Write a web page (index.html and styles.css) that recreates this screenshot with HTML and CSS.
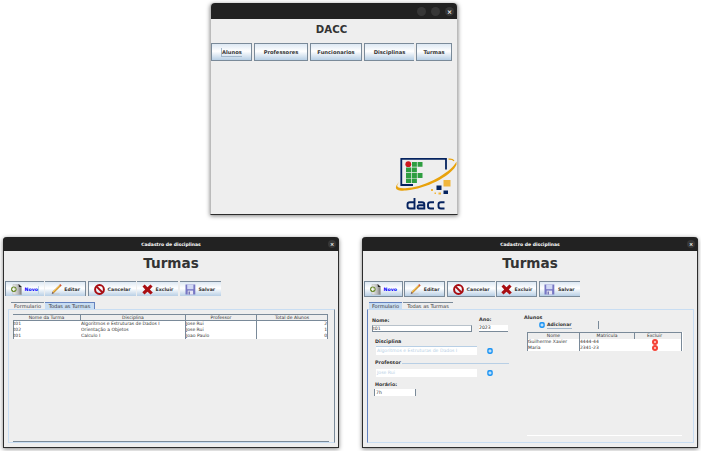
FILE: index.html
```html
<!DOCTYPE html>
<html lang="pt-BR">
<head>
<meta charset="utf-8">
<title>DACC</title>
<link rel="stylesheet" href="styles.css">
</head>
<body>
<svg class="defs" width="0" height="0" aria-hidden="true">
  <defs>
    <linearGradient id="pageFill" x1="0" x2="1"><stop offset="0" stop-color="#eee"/><stop offset=".6" stop-color="#bbb"/><stop offset="1" stop-color="#777"/></linearGradient>
    <symbol id="new" viewBox="0 0 11 11"><path d="M2 .3h6l2.500 2.500v8H2z" fill="url(#pageFill)" stroke="#aaa" stroke-width=".4"/><path d="M7.500 0l3.200 3H8z" fill="#222"/><circle cx="2.800" cy="5.200" r="2.800" fill="#6f8d35"/><path d="M2.800 3.400V7M1 5.200h3.600" stroke="#fff" stroke-width="1.200"/></symbol>
    <symbol id="edit" viewBox="0 0 11 11"><path d="M.5 10h8" stroke="#bbb" stroke-width=".7"/><path d="M2 8.500L9.300 1.400" stroke="#c58424" stroke-width="2"/><path d="M2 8.200L9 1.300" stroke="#ffd35b" stroke-width="1"/><path d="M9 1.700l1-1" stroke="#d55232" stroke-width="2"/><path d="M.8 9.800l.6-1.900 1.400 1.300z" fill="#533"/></symbol>
    <symbol id="cancel" viewBox="0 0 11 11"><circle cx="5.500" cy="5.500" r="4.400" fill="none" stroke="#a80d12" stroke-width="2"/><path d="M2.500 2.500l6 6" stroke="#a80d12" stroke-width="1.800"/></symbol>
    <symbol id="delete" viewBox="0 0 11 11"><path d="M2.700.5L5.500 3.200 8.400.4l2.200 2.100-2.800 3 3 3-2.200 2.100-3.100-2.800-3 2.800L.3 8.300l2.900-2.900L.5 2.600z" fill="#a90e12"/></symbol>
    <symbol id="save" viewBox="0 0 11 11"><path d="M.5.5h9.800v10H.5z" fill="#7777c4"/><path d="M2.200.5h6.200v4.700H2.200z" fill="#d2d9f4"/><path d="M2.700 6.600h5.400v3.900H2.700z" fill="#e7e7f4"/><path d="M3.500 7.400H5v3H3.500z" fill="#7777b4"/></symbol>
    <symbol id="plus" viewBox="0 0 6 6"><rect x=".2" y=".1" width="5.600" height="5.800" rx="1.800" fill="#2196f3"/><path d="M3 1.400v3.200M1.400 3h3.200" stroke="#fff" stroke-width=".9"/></symbol>
    <symbol id="remove" viewBox="0 0 6 6"><circle cx="3" cy="3" r="3" fill="#f44336"/><path d="M2 2l2 2M4 2L2 4" stroke="#fff" stroke-width=".6"/></symbol>
  </defs>
</svg>

<main class="desktop">
  <section class="window main-window">
    <header class="bar"><i class="dot"></i><i class="dot"></i><i class="dot">×</i></header>
    <h1 class="app-title"><span>DACC</span></h1>
    <nav class="menu">
      <button class="btn w41"><span class="focus">Alunos</span></button>
      <button class="btn w54"><span>Professores</span></button>
      <button class="btn w52"><span>Funcionarios</span></button>
      <button class="btn w50"><span>Disciplinas</span></button>
      <button class="btn w36"><span>Turmas</span></button>
    </nav>
    <div class="logo-row">
      <svg class="logo" width="64" height="57" viewBox="0 0 64 57">
        <g transform="translate(0 1)">
          <path d="M20 27H8.300V.8H53v10.700" fill="none" stroke="#05235f" stroke-width="1.800"/>
          <path d="M19 4h4.900v4.700H19zM24.600 4h4.900v4.700h-4.900zM13 9.400h5.300v4.900H13zM19 9.400h4.900v4.900H19zM13 15h5.300v4.900H13zM19 15h4.900v4.900H19zM24.600 15h4.900v4.900h-4.900zM13 20.600h5.300V25H13zM19 20.600h4.900V25H19z" fill="#2f9e41"/>
          <circle cx="15.300" cy="6.200" r="2.900" fill="#cd191e"/>
          <path d="M8 22.500C-.5 29.500 1 34.500 17 32 38 29 60 16 63.500 6.500v-3C59 13 37 26.500 19 29.500 3 32 1 28.500 8 22.500z" fill="#e8a20c"/>
          <path d="M55.500 1.200q4-.5 5.500 1.600" fill="none" stroke="#e8a20c" stroke-width="1.300"/>
          <path d="M50.500 22h7v6.500h-7z" fill="#f0b63c"/><path d="M43.500 27.500h5v4.500h-5zM50.500 32.500H55V36h-4.500z" fill="#05235f"/><path d="M38 31h2v2h-2zM45.500 34.500H48v2h-2.500zM41.500 34.500H43V36h-1.500z" fill="#f0b63c"/>
        </g>
        <g fill="none" stroke="#05235f" stroke-width="1.900"><path d="M21.500 41v10.500h-4.500q-2.500 0-2.500-2.300v-1.600q0-2.300 2.500-2.300h4.500M25 45.300h4q2.300 0 2.300 2.300v3.900h-5q-1.700 0-1.700-1.600t1.700-1.600h5M41 45.300h-3.500q-2.500 0-2.500 2.300v1.600q0 2.300 2.500 2.300H41M51.500 45.300H48q-2.500 0-2.500 2.300v1.600q0 2.300 2.500 2.300h3.500"/></g>
      </svg>
    </div>
  </section>

  <section class="window list-window">
    <header class="bar titled"><span class="caption">Cadastro de disciplinas</span><i class="dot">×</i></header>
    <h2 class="title"><span>Turmas</span></h2>
    <div class="tools">
      <button class="btn w39 blue"><svg><use href="#new"/></svg><span class="t-novo">Novo</span></button>
      <button class="btn w41"><svg><use href="#edit"/></svg><span>Editar</span></button>
      <button class="btn w48"><svg><use href="#cancel"/></svg><span>Cancelar</span></button>
      <button class="btn w41"><svg><use href="#delete"/></svg><span>Excluir</span></button>
      <button class="btn w41"><svg><use href="#save"/></svg><span>Salvar</span></button>
    </div>
    <div class="tabs"><span class="tab form-tab">Formulario</span><span class="tab all-tab selected">Todas as Turmas</span></div>
    <div class="panel list-panel">
      <div class="scroll">
        <div class="grid classes">
          <b>Nome da Turma</b><b>Disciplina</b><b>Professor</b><b>Total de Alunos</b>
          <span>t01</span><span>Algoritmos e Estruturas de Dados I</span><span>Jose Rui</span><span class="num">2</span>
          <span>t02</span><span>Orientação a Objetos</span><span>Jose Rui</span><span class="num">1</span>
          <span>t01</span><span>Calculo I</span><span>Joao Paulo</span><span class="num">0</span>
        </div>
      </div>
    </div>
  </section>

  <section class="window form-window">
    <header class="bar titled"><span class="caption">Cadastro de disciplinas</span><i class="dot">×</i></header>
    <h2 class="title"><span>Turmas</span></h2>
    <div class="tools">
      <button class="btn w39 blue"><svg><use href="#new"/></svg><span>Novo</span></button>
      <button class="btn w41"><svg><use href="#edit"/></svg><span>Editar</span></button>
      <button class="btn w48"><svg><use href="#cancel"/></svg><span>Cancelar</span></button>
      <button class="btn w41"><svg><use href="#delete"/></svg><span>Excluir</span></button>
      <button class="btn w41"><svg><use href="#save"/></svg><span>Salvar</span></button>
    </div>
    <div class="tabs"><span class="tab form-tab selected">Formulario</span><span class="tab all-tab">Todas as Turmas</span></div>
    <div class="panel form-panel">
      <div class="fields">
        <div class="pair">
          <label class="name">Nome:<span class="input">t01</span></label>
          <label class="year">Ano:<span class="input">2023</span></label>
        </div>
        <div class="group-title first">Disciplina</div>
        <div class="pick top-line"><span class="input">Algoritmos e Estruturas de Dados I</span><svg><use href="#plus"/></svg></div>
        <div class="group-title second">Professor<i></i></div>
        <div class="pick"><span class="input">Jose Rui</span><svg><use href="#plus"/></svg></div>
        <div class="group-title third">Horário:</div>
        <span class="input hour">7h</span>
      </div>
      <div class="students">
        <div class="label">Alunos</div>
        <div class="add"><svg><use href="#plus"/></svg><span>Adicionar</span></div>
        <div class="student-scroll">
          <div class="grid student-grid">
            <b>Nome</b><b>Matricula</b><b class="last">Excluir</b>
            <span>Guilherme Xavier</span><span>4444-44</span><span class="icon"><svg><use href="#remove"/></svg></span>
            <span>Maria</span><span>2341-23</span><span class="icon"><svg><use href="#remove"/></svg></span>
          </div>
        </div>
      </div>
    </div>
  </section>
</main>
</body>
</html>
```
FILE: styles.css
```css
* { box-sizing: border-box; }
body { margin: 0; background: #fff; color: #333; font: 4.5px/6px "DejaVu Sans", sans-serif; }
.defs { display: block; }
.desktop { position: relative; width: 701px; height: 451px; overflow: hidden; }
.window { position: absolute; background: #eee; border: 1px solid #2c2c2c; border-top: 0; border-radius: 4px 4px 0 0; box-shadow: 0 1px 4px rgba(0,0,0,.5); display: flex; flex-direction: column; }
.main-window { left: 210px; top: 3px; width: 248px; height: 212px; border-color: #bbb; border-bottom-color: #2c2c2c; }
.list-window { left: 3px; top: 237px; width: 336px; height: 211px; }
.form-window { left: 362px; top: 237px; width: 336px; height: 211px; }
.bar { height: 16px; margin: 0 -1px; background: #222; border-radius: 4px 4px 0 0; display: flex; justify-content: flex-end; align-items: center; gap: 5px; padding-right: 3px; flex: none; }
.main-window .bar { margin: 0; }
.bar.titled { height: 14px; }
.caption { flex: 1; padding: 1px 0 0 16px; text-align: center; color: #fff; font-size: 4.55px; font-weight: bold; }
.dot { width: 9px; height: 9px; border-radius: 50%; background: #373737; color: #fff; font: bold 6px/9px "DejaVu Sans", sans-serif; text-align: center; }
.titled .dot { width: 8px; height: 8px; line-height: 8px; font-size: 5px; }
.app-title { margin: 0; height: 24px; padding: 2px 5px 0 0; font-size: 10.2px; line-height: 18px; text-align: center; }
.title { margin: 0; height: 30px; font-size: 13.6px; line-height: 24px; text-align: center; flex: none; }
.menu, .tools { display: flex; gap: 2px; flex: none; }
.tools { margin-left: 1px; gap: 1.4px; height: 16px; }
.btn { height: 18px; padding: 0; border: 1px solid #7a8a99; background: linear-gradient(#dde8f3, #fff 45%, #b8cfe5); color: #333; font: bold 5.2px/8px "DejaVu Sans", sans-serif; display: flex; align-items: center; justify-content: center; gap: 2px; flex: none; white-space: nowrap; }
.tools .btn { height: 16px; font-size: 4.7px; gap: 2.5px; padding-top: 1px; }
.list-window .tools .btn { height: 15px; border-width: 1px 0 0; }
.list-window .tools .btn:nth-child(1), .list-window .tools .btn:nth-child(3) { border-left-width: 1px; }
.list-window .tools .btn:nth-child(2) { border-right-width: 1px; }
.form-window .tools .btn:nth-child(3), .form-window .tools .btn:last-child { border-right-width: 0; }
.tools svg { width: 11px; height: 11px; flex: none; }
.w41 { width: 41px; } .w54 { width: 54px; } .w52 { width: 52px; } .w50 { width: 50px; } .w36 { width: 36px; } .w39 { width: 39px; } .w48 { width: 48px; }
.btn.w50 { border-width: 1px 0 1px 1px; }
.btn.blue { color: #00f; }
.t-novo { border-right: 1px solid #b8cfe5; }
.focus { border: solid #a3b8cc; border-width: 0 0 1px 1px; }
.logo-row { margin-top: auto; display: flex; justify-content: flex-end; height: 57px; }
.tabs { display: flex; height: 7px; margin: 5px 0 0 7px; flex: none; }
.form-window .tabs { margin-left: 6px; }
.tab { height: 7px; border-top: 1px solid #7a8a99; text-align: center; font-size: 5.1px; line-height: 7px; white-space: nowrap; }
.form-tab { width: 33px; margin-right: 1px; }
.all-tab { width: 50px; }
.tab.selected { background: #c8ddf2; border-color: #6382bf; }
.all-tab.selected { border-right: 1px solid #6382bf; }
.panel { width: 327px; height: 134px; margin-left: 4px; border: 1px solid #c8ddf2; flex: none; }
.list-panel { border-right-color: #7a8a99; padding: 4px 5px 0 4px; }
.scroll { height: 128px; border-bottom: 1px solid #7a8a99; }
.grid { display: grid; background: #fff; white-space: nowrap; border-left: 1px solid #7a8a99; }
.grid b { height: 7px; border: solid #7a8a99; border-width: 1px 1px 1px 0; background: #eee; font-weight: normal; text-align: center; line-height: 6px; }
.grid span { height: 6px; border-right: 1px solid #7a8a99; overflow: hidden; }
.classes { width: 315px; grid-template-columns: 68px 105px 71px 71px; border-left: 0; box-shadow: inset 1px 0 #7a8a99; }
.classes span:nth-child(4n+1) { border-right-color: #fff; padding-left: .5px; }
.grid .num { text-align: right; }
.form-panel { border-left-color: #6382bf; display: flex; }
.fields { width: 156px; padding: 7px 0 0 4px; }
.pair { display: flex; gap: 7px; height: 21px; font-weight: bold; line-height: 7px; font-size: 4.8px; }
.pair label { display: flex; flex-direction: column; gap: 1px; }
.input { display: block; background: #fff; font-weight: normal; font-size: 4.6px; line-height: 7px; height: 7px; white-space: nowrap; }
.name { width: 100px; } .year { width: 29px; }
.pair .input { border-bottom: 1px solid #7a8a99; line-height: 6px; }
.name .input { border: 1px solid #7a8a99; border-top-color: #b8c2cb; line-height: 6px; }
.year { margin-top: -1px; } .year .input { margin-top: 1px; }
.group-title { font-size: 4.8px; font-weight: bold; height: 8px; line-height: 8px; padding-left: 3px; display: flex; align-items: center; }
.group-title i { flex: 1; height: 1px; background: #b8cfe5; margin: 0 15px 0 1px; }
.pick { height: 9px; display: flex; align-items: center; gap: 9.5px; margin-left: 4px; }
.pick .input { width: 101px; height: 8px; line-height: 8px; color: #b8cfe5; padding-left: 1px; }
.top-line .input { border-top: 1px solid #b8cfe5; height: 9px; }
.pick svg, .add svg { width: 6px; height: 6px; flex: none; }
.second { margin-top: 4px; }
.second + .pick { margin-top: 1px; }
.third { margin-top: 4px; }
.hour { width: 42px; height: 7px; margin: 0 0 0 2px; border: solid #7a8a99; border-width: 0 1px; padding-left: 1px; line-height: 7px; }
.students { width: 158px; padding-top: 4px; }
.label { height: 7px; font-size: 4.8px; font-weight: bold; line-height: 7px; }
.add { display: flex; align-items: center; width: 60px; height: 8px; margin-left: 15px; gap: 2px; font-weight: bold; font-size: 4.6px; border-right: 1px solid #7a8a99; }
.add span { border-bottom: 1px solid #a3b8cc; }
.student-scroll { height: 104px; margin: 3px 0 0 3px; width: 155px; border-bottom: 1px solid #fff; }
.student-grid { grid-template-columns: 52px 55px 47px; box-shadow: 1px 0 #fff; }
.student-grid b { border-bottom: 0; }
.student-grid .last { padding-right: 7px; }
.student-grid .icon { display: flex; justify-content: center; padding-right: 6px; }
.student-grid span:nth-child(3n+2) { border-right: 0; }
.icon svg { width: 6px; height: 6px; }
```
